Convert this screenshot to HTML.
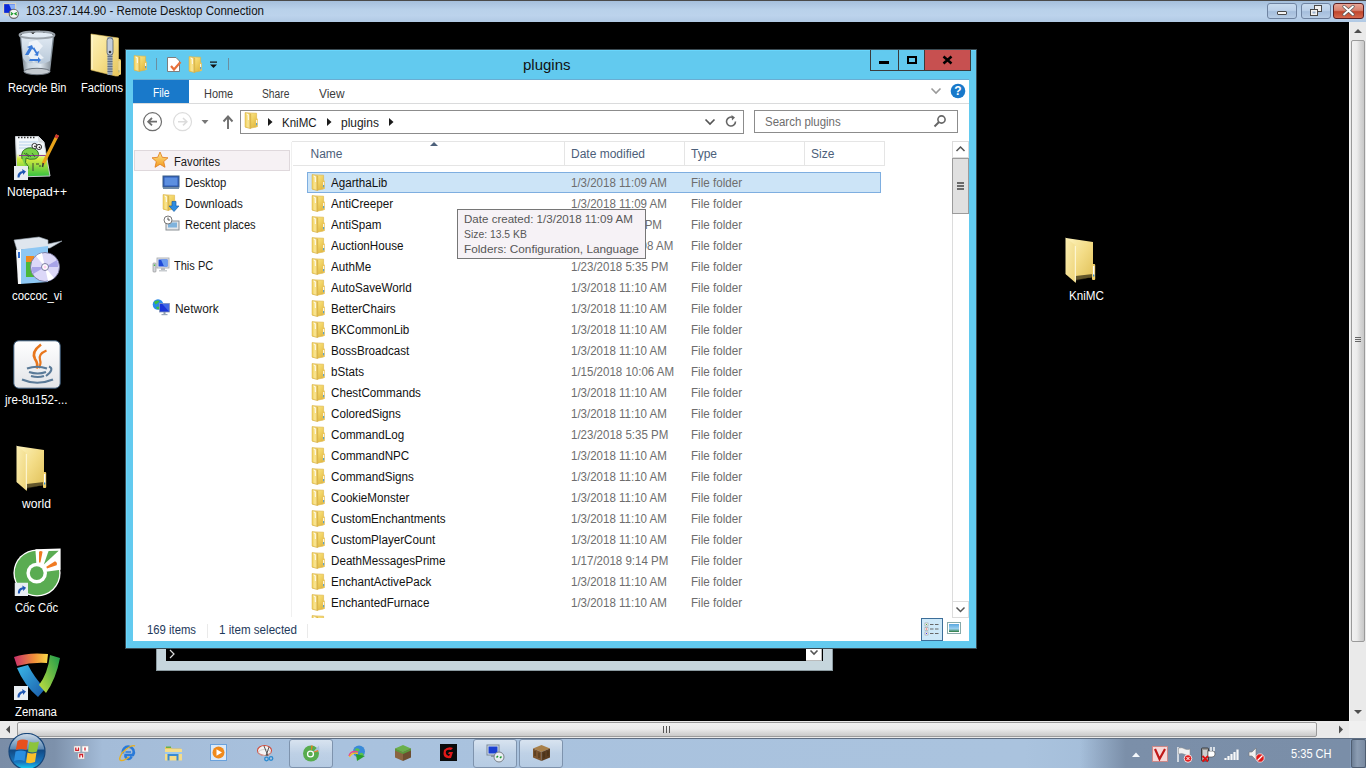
<!DOCTYPE html>
<html><head><meta charset="utf-8">
<style>
*{margin:0;padding:0;box-sizing:border-box}
html,body{width:1366px;height:768px;overflow:hidden;background:#000;font-family:"Liberation Sans",sans-serif;font-size:12px}
.a{position:absolute;display:block}
.t{position:absolute;white-space:nowrap;line-height:1;}
.sh{text-shadow:1px 1px 1px #000}
</style></head><body>
<svg width="0" height="0" style="position:absolute">
<defs>
<linearGradient id="fg1" x1="0" y1="0" x2="1" y2="0"><stop offset="0" stop-color="#fbeeaa"/><stop offset="1" stop-color="#f0d572"/></linearGradient>
<linearGradient id="fg2" x1="0" y1="0" x2="0" y2="1"><stop offset="0" stop-color="#fff6c4"/><stop offset="1" stop-color="#efd676"/></linearGradient>
<linearGradient id="fb" x1="0" y1="0" x2="1" y2="1"><stop offset="0" stop-color="#fff0a0"/><stop offset="0.5" stop-color="#f2d466"/><stop offset="1" stop-color="#ddb23a"/></linearGradient>
<linearGradient id="ff" x1="0" y1="0" x2="1" y2="0"><stop offset="0" stop-color="#f0cf58"/><stop offset="0.55" stop-color="#fbe898"/><stop offset="1" stop-color="#d8b040"/></linearGradient>
<symbol id="fold" viewBox="0 0 14 17">
<path d="M1.5 0.8 L12.6 1.2 L12.6 15 L6 16.2 L1.5 15.2 Z" fill="url(#fb)" stroke="#dcb448" stroke-width="0.6"/>
<path d="M1 0.6 L6.8 2 L6.8 16.6 L1 15 Z" fill="url(#ff)" stroke="#d4ae48" stroke-width="0.5"/>
<path d="M2.6 2 L4.2 2.6 L4.4 8" stroke="#fff" stroke-width="0.9" fill="none"/>
<rect x="11.6" y="6.4" width="2.2" height="8.6" rx="0.6" fill="#eac458"/>
<rect x="12.2" y="8" width="0.9" height="3" fill="#fff"/>
<rect x="12.2" y="11" width="0.9" height="2.3" fill="#3b9ae6"/>
</symbol>
<linearGradient id="Fb" x1="0" y1="0" x2="1" y2="1"><stop offset="0" stop-color="#fdf3be"/><stop offset="0.5" stop-color="#f3dc86"/><stop offset="1" stop-color="#e0c058"/></linearGradient>
<linearGradient id="Ff" x1="0" y1="0" x2="1" y2="1"><stop offset="0" stop-color="#fbeeb2"/><stop offset="1" stop-color="#edd376"/></linearGradient>
<symbol id="bigfold" viewBox="0 0 34 48">
<path d="M3 2 L30 6 L30 41 L12 44 L3 38 Z" fill="url(#Fb)"/>
<path d="M12.5 40 L30 38 L30 41 L12.5 45 Z" fill="#2a2410" opacity="0.7"/>
<path d="M2.5 1.5 L12.8 9.5 L12.8 47 L2.5 38 Z" fill="url(#Ff)"/>
<path d="M11.8 9.5 L12.8 10 L12.8 46 L11.8 45 Z" fill="#fffbe0"/>
<rect x="29" y="28" width="3.2" height="16" rx="1" fill="#efcf6a"/>
<rect x="30" y="30" width="1.3" height="9" fill="#fff"/>
<rect x="30" y="38.5" width="1.3" height="2" fill="#2f8ae0"/>
</symbol>
<symbol id="shortcut" viewBox="0 0 14 14">
<rect x="0" y="0" width="14" height="14" fill="#e8edf2"/>
<path d="M3.5 11.5 Q3 6 8.5 5 L8 3 L12 5.5 L9 9 L9 7 Q6 7.5 5.5 11.5 Z" fill="#1f57b3"/>
</symbol>
</defs>
</svg>

<div class="a" style="left:0px;top:0px;width:1366px;height:1px;background:#4a4a4a"></div>
<div class="a" style="left:0px;top:1px;width:1366px;height:21px;background:linear-gradient(#a5bfdc,#b9d1ea 40%,#bcd3ec 70%,#b1c9e4)"></div>
<svg class="a" style="left:1px;top:1px" width="19" height="19" viewBox="0 0 19 19"><rect x="2.5" y="2.5" width="12" height="10" fill="#0a28d8" stroke="#d8d4c4" stroke-width="1.3"/><path d="M8 3.2 L14 3.2 L14 8 L10 8 Z" fill="#8ab0f8"/><rect x="5" y="13" width="5" height="2" fill="#d8d4c4"/><circle cx="12.8" cy="12.8" r="4.6" fill="#f4f4f4" stroke="#6a6a6a" stroke-width="1.1"/><path d="M9.8 11.5 L11.5 12.8 L9.8 14 M15.8 11.5 L14 12.8 L15.8 14" stroke="#1c9a2a" stroke-width="1.4" fill="none"/></svg>
<div class="t" style="left:25.5px;top:5.42px;font-size:12.5px;color:#111;transform:scaleX(0.9232);transform-origin:0 0;">103.237.144.90 - Remote Desktop Connection</div>
<div class="a" style="left:1267px;top:3px;width:30px;height:16px;border:1px solid #6f84a2;border-radius:3px;background:linear-gradient(#c8dbef,#bcd1ea 45%,#a5bedc 55%,#b7cde6)"></div>
<div class="a" style="left:1277px;top:11px;width:10px;height:4px;background:#f4f4f4;border:1px solid #4a4a4a;border-radius:1px"></div>
<div class="a" style="left:1301px;top:3px;width:30px;height:16px;border:1px solid #6f84a2;border-radius:3px;background:linear-gradient(#c8dbef,#bcd1ea 45%,#a5bedc 55%,#b7cde6)"></div>
<svg class="a" style="left:1310px;top:5px" width="12" height="11" viewBox="0 0 12 11"><rect x="4.5" y="0.5" width="7" height="6" fill="#f2f2f2" stroke="#4a4a4a"/><rect x="0.5" y="4.5" width="7" height="6" fill="#f2f2f2" stroke="#4a4a4a"/><rect x="2.5" y="6.5" width="3" height="2" fill="#9db4d0"/></svg>
<div class="a" style="left:1333px;top:3px;width:31px;height:16px;border:1px solid #5a1f22;border-radius:3px;background:linear-gradient(#e8a597,#d88270 45%,#c0462c 55%,#d6694f)"></div>
<svg class="a" style="left:1342px;top:5px" width="13" height="11" viewBox="0 0 13 11"><path d="M2 1.5 L11 9.5 M11 1.5 L2 9.5" stroke="#5b5b5b" stroke-width="3.2" stroke-linecap="round"/><path d="M2 1.5 L11 9.5 M11 1.5 L2 9.5" stroke="#fff" stroke-width="1.8" stroke-linecap="round"/></svg>
<div class="a" style="left:1349px;top:22px;width:17px;height:699px;background:#eaeaea;border-left:1px solid #f4f4f4"></div>
<svg class="a" style="left:1350px;top:22px" width="16" height="18" viewBox="0 0 16 18"><path d="M4 11 L8 7 L12 11 Z" fill="#4d4d4d"/></svg>
<div class="a" style="left:1351px;top:40px;width:14px;height:602px;border:1px solid #9a9a9a;border-radius:2px;background:linear-gradient(90deg,#f1f1f1,#ececec 40%,#d6d6d6 70%,#c8c8c8)"></div>
<div class="a" style="left:1355px;top:337px;width:6px;height:1px;background:#666"></div>
<div class="a" style="left:1355px;top:339px;width:6px;height:1px;background:#666"></div>
<div class="a" style="left:1355px;top:341px;width:6px;height:1px;background:#666"></div>
<svg class="a" style="left:1350px;top:703px" width="16" height="18" viewBox="0 0 16 18"><path d="M4 7 L8 11 L12 7 Z" fill="#4d4d4d"/></svg>
<div class="a" style="left:0px;top:721px;width:1349px;height:17px;background:#eaeaea"></div>
<svg class="a" style="left:0px;top:721px" width="17" height="17" viewBox="0 0 17 17"><path d="M10 4.5 L6 8.5 L10 12.5 Z" fill="#4d4d4d"/></svg>
<div class="a" style="left:17px;top:722px;width:1300px;height:15px;border:1px solid #9a9a9a;border-radius:2px;background:linear-gradient(#f2f2f2,#ececec 45%,#d8d8d8 75%,#cacaca)"></div>
<div class="a" style="left:663px;top:726px;width:1px;height:7px;background:#555"></div>
<div class="a" style="left:666px;top:726px;width:1px;height:7px;background:#555"></div>
<div class="a" style="left:669px;top:726px;width:1px;height:7px;background:#555"></div>
<svg class="a" style="left:1332px;top:721px" width="17" height="17" viewBox="0 0 17 17"><path d="M7 4.5 L11 8.5 L7 12.5 Z" fill="#4d4d4d"/></svg>
<div class="a" style="left:1349px;top:721px;width:17px;height:17px;background:#f0f0f0"></div>
<div class="a" style="left:0px;top:738px;width:1366px;height:30px;background:linear-gradient(90deg,#7a8da7 0,#7d91ab 4%,#a4bcd8 7.5%,#a9c2de 25%,#aac3de 75%,#9cb6d3 88%,#8097b6 100%);border-top:1px solid #5f6f84"></div>
<svg class="a" style="left:7px;top:733px" width="40" height="35" viewBox="0 0 40 35"><defs><linearGradient id="orb" x1="0" y1="0" x2="0" y2="1"><stop offset="0" stop-color="#d0dce8"/><stop offset="0.42" stop-color="#5f8ab4"/><stop offset="0.47" stop-color="#114a86"/><stop offset="0.8" stop-color="#1a76be"/><stop offset="1" stop-color="#18d8f8"/></linearGradient></defs><circle cx="20" cy="18.5" r="18" fill="url(#orb)" stroke="#17467a" stroke-width="1.2"/><path d="M10.5 8 Q15 5.5 21 7.5 L19.5 17 Q14.5 15 8.8 17 Z" fill="#e8501c"/><path d="M22.5 8.5 Q26.5 10.5 32 8.5 L30 18.5 Q25.5 20.5 21 18.5 Z" fill="#8cc43c"/><path d="M8.5 18.5 Q14 16.5 19 18.5 L17.5 28 Q12.5 26 7 28 Z" fill="#2a8ee0"/><path d="M20.5 19.5 Q25 21.5 29.5 19.5 L28 29 Q23.5 31 19 29.5 Z" fill="#fbc02a"/></svg>
<div class="a" style="left:289px;top:739px;width:44px;height:29px;border:1px solid #7e93ad;border-radius:3px;background:linear-gradient(rgba(255,255,255,0.55),rgba(255,255,255,0.25) 50%,rgba(255,255,255,0.15))"></div>
<div class="a" style="left:473px;top:739px;width:44px;height:29px;border:1px solid #7e93ad;border-radius:3px;background:linear-gradient(rgba(255,255,255,0.55),rgba(255,255,255,0.25) 50%,rgba(255,255,255,0.15))"></div>
<div class="a" style="left:519px;top:739px;width:44px;height:29px;border:1px solid #7e93ad;border-radius:3px;background:linear-gradient(rgba(255,255,255,0.55),rgba(255,255,255,0.25) 50%,rgba(255,255,255,0.15))"></div>
<div class="a" style="left:156px;top:645px;width:677px;height:26px;background:#c6d6dd;border:1px solid #8b9aa0"></div>
<div class="a" style="left:166px;top:645px;width:657px;height:16px;background:#000"></div>
<svg class="a" style="left:168px;top:648px" width="8" height="12" viewBox="0 0 8 12"><path d="M2 2 L6 6 L2 10" stroke="#ddd" stroke-width="1.2" fill="none"/></svg>
<div class="a" style="left:806px;top:645px;width:16px;height:16px;background:#fff;border-right:1px solid #bbb;border-bottom:1px solid #bbb"></div>
<svg class="a" style="left:806px;top:648px" width="16" height="10" viewBox="0 0 16 10"><path d="M4.5 2.5 L8 6 L11.5 2.5" stroke="#555" stroke-width="1.6" fill="none"/></svg>
<div class="a" style="left:125px;top:49px;width:852px;height:600px;background:#3a4a52"></div>
<div class="a" style="left:126px;top:50px;width:850px;height:598px;background:#62caef;border-top:1px solid #69d6fc;border-left:1px solid #69d6fc"></div>
<div class="a" style="left:133px;top:80px;width:836px;height:561px;background:#fff"></div>
<div class="a" style="left:133px;top:79px;width:836px;height:1px;background:#6aadd2"></div>
<div class="t" style="left:523px;top:56.90px;font-size:15px;color:#111;">plugins</div>
<div class="a" style="left:870px;top:50px;width:101px;height:21px;background:#3b3b3b"></div>
<div class="a" style="left:871px;top:50px;width:27px;height:20px;background:#62caef"></div>
<div class="a" style="left:899px;top:50px;width:25px;height:20px;background:#62caef"></div>
<div class="a" style="left:925px;top:50px;width:45px;height:20px;background:#c75050"></div>
<div class="a" style="left:879px;top:61px;width:10px;height:3px;background:#000"></div>
<div class="a" style="left:907px;top:56px;width:10px;height:8px;border:2px solid #000"></div>
<svg class="a" style="left:942px;top:55px" width="11" height="10" viewBox="0 0 11 10"><path d="M1.5 1.5 L9.5 8.5 M9.5 1.5 L1.5 8.5" stroke="#000" stroke-width="2.5"/></svg>
<svg class="a" style="left:133px;top:55px" width="14" height="17" viewBox="0 0 14 17"><use href="#fold"/></svg>
<div class="a" style="left:156px;top:58px;width:1px;height:12px;background:#6b8fa0"></div>
<svg class="a" style="left:166px;top:57px" width="17" height="16" viewBox="0 0 17 16"><path d="M1.5 0.5 H10 L13.5 4 V14.5 H1.5 Z" fill="#fff" stroke="#7d7d7d"/><path d="M5 9 L8 12.5 L14.5 5" stroke="#e8703a" stroke-width="2.2" fill="none"/></svg>
<svg class="a" style="left:188px;top:56px" width="14" height="17" viewBox="0 0 14 17"><use href="#fold"/></svg>
<svg class="a" style="left:209px;top:60px" width="9" height="9" viewBox="0 0 9 9"><rect x="1" y="1.5" width="7" height="1.2" fill="#111"/><path d="M1 4.5 H8 L4.5 8 Z" fill="#111"/></svg>
<div class="a" style="left:228px;top:58px;width:1px;height:12px;background:#6b8fa0"></div>
<div class="a" style="left:133px;top:80px;width:56px;height:23px;background:#1979ca"></div>
<div class="t" style="left:152.5px;top:87.34px;font-size:12px;color:#fff;transform:scaleX(0.8585);transform-origin:0 0;">File</div>
<div class="t" style="left:203.5px;top:87.84px;font-size:12px;color:#3c3c3c;transform:scaleX(0.9122);transform-origin:0 0;">Home</div>
<div class="t" style="left:261.5px;top:87.84px;font-size:12px;color:#3c3c3c;transform:scaleX(0.8588);transform-origin:0 0;">Share</div>
<div class="t" style="left:318.5px;top:87.84px;font-size:12px;color:#3c3c3c;transform:scaleX(0.9886);transform-origin:0 0;">View</div>
<div class="a" style="left:133px;top:103px;width:836px;height:1px;background:#dadbdc"></div>
<svg class="a" style="left:928px;top:84px" width="16" height="14" viewBox="0 0 16 14"><path d="M3.5 4.5 L8 9 L12.5 4.5" stroke="#9a9a9a" stroke-width="1.6" fill="none"/></svg>
<svg class="a" style="left:950px;top:83px" width="16" height="16" viewBox="0 0 16 16"><circle cx="8" cy="8" r="7.3" fill="#1979ca"/><text x="8" y="12.3" font-family="Liberation Sans" font-weight="bold" font-size="12" fill="#fff" text-anchor="middle">?</text></svg>
<svg class="a" style="left:142px;top:111px" width="22" height="22" viewBox="0 0 22 22"><circle cx="10.5" cy="10.7" r="9" fill="none" stroke="#6e6e6e" stroke-width="1.2"/><path d="M15 10.7 H6.5 M10 7 L6.2 10.7 L10 14.4" stroke="#6e6e6e" stroke-width="1.8" fill="none"/></svg>
<svg class="a" style="left:172px;top:111px" width="22" height="22" viewBox="0 0 22 22"><circle cx="10.5" cy="10.7" r="9" fill="none" stroke="#dcdcdc" stroke-width="1.2"/><path d="M6 10.7 H14.5 M11 7 L14.8 10.7 L11 14.4" stroke="#dcdcdc" stroke-width="1.6" fill="none"/></svg>
<svg class="a" style="left:200px;top:118px" width="10" height="8" viewBox="0 0 10 8"><path d="M1.5 2 H8.5 L5 6 Z" fill="#777"/></svg>
<svg class="a" style="left:221px;top:114px" width="14" height="16" viewBox="0 0 14 16"><path d="M7 15 V3 M2.5 7.5 L7 2.5 L11.5 7.5" stroke="#6e6e6e" stroke-width="1.9" fill="none"/></svg>
<div class="a" style="left:240px;top:110px;width:504px;height:24px;border:1px solid #8c8c8c;background:#fff"></div>
<svg class="a" style="left:244px;top:112px" width="14" height="17" viewBox="0 0 14 17"><use href="#fold"/></svg>
<svg class="a" style="left:267px;top:117px" width="6" height="10" viewBox="0 0 6 10"><path d="M1 1 L5.5 5 L1 9 Z" fill="#1a1a1a"/></svg>
<svg class="a" style="left:326px;top:117px" width="6" height="10" viewBox="0 0 6 10"><path d="M1 1 L5.5 5 L1 9 Z" fill="#1a1a1a"/></svg>
<svg class="a" style="left:388px;top:117px" width="6" height="10" viewBox="0 0 6 10"><path d="M1 1 L5.5 5 L1 9 Z" fill="#1a1a1a"/></svg>
<div class="t" style="left:281.5px;top:116.84px;font-size:12px;color:#1a1a1a;transform:scaleX(0.9609);transform-origin:0 0;">KniMC</div>
<div class="t" style="left:340.5px;top:116.84px;font-size:12px;color:#1a1a1a;transform:scaleX(0.9966);transform-origin:0 0;">plugins</div>
<svg class="a" style="left:703px;top:116px" width="14" height="12" viewBox="0 0 14 12"><path d="M2.5 3.5 L7 8 L11.5 3.5" stroke="#555" stroke-width="1.7" fill="none"/></svg>
<svg class="a" style="left:724px;top:114px" width="15" height="15" viewBox="0 0 15 15"><path d="M11.5 7.5 A4.5 4.5 0 1 1 9 3.5" stroke="#666" stroke-width="1.6" fill="none"/><path d="M7.5 1 L11 3.5 L8 6.5 Z" fill="#666"/></svg>
<div class="a" style="left:754px;top:110px;width:204px;height:23px;border:1px solid #8c8c8c;background:#fff"></div>
<div class="t" style="left:764.5px;top:116.04px;font-size:12px;color:#6d6d6d;transform:scaleX(0.9536);transform-origin:0 0;">Search plugins</div>
<svg class="a" style="left:933px;top:114px" width="14" height="15" viewBox="0 0 14 15"><circle cx="8.5" cy="5.5" r="3.6" fill="none" stroke="#666" stroke-width="1.6"/><path d="M6 8 L1.5 12.5" stroke="#666" stroke-width="1.9"/></svg>
<div class="a" style="left:134px;top:150px;width:156px;height:21px;background:#f6f1f4;border:1px solid #dfd8dc"></div>
<svg class="a" style="left:151px;top:151px" width="18" height="18" viewBox="0 0 18 18"><defs><linearGradient id="st" x1="0" y1="0" x2="0" y2="1"><stop offset="0" stop-color="#fde58a"/><stop offset="1" stop-color="#f39a1e"/></linearGradient></defs><path d="M9 1 L11.3 6.3 L17 6.8 L12.7 10.6 L14 16.3 L9 13.3 L4 16.3 L5.3 10.6 L1 6.8 L6.7 6.3 Z" fill="url(#st)" stroke="#e07a1a" stroke-width="0.8"/></svg>
<div class="t" style="left:174.3px;top:155.84px;font-size:12px;color:#1a1a1a;transform:scaleX(0.9322);transform-origin:0 0;">Favorites</div>
<svg class="a" style="left:162px;top:174px" width="18" height="16" viewBox="0 0 18 16"><rect x="1" y="2" width="16" height="11" fill="#2d59b8" stroke="#3b5f86"/><rect x="2.5" y="3.5" width="13" height="8" fill="#5c8fe0"/><rect x="1" y="13" width="16" height="2" fill="#6f8aa6"/></svg>
<div class="t" style="left:184.5px;top:176.84px;font-size:12px;color:#1a1a1a;transform:scaleX(0.9404);transform-origin:0 0;">Desktop</div>
<svg class="a" style="left:162px;top:194px" width="14" height="17" viewBox="0 0 14 17"><use href="#fold"/></svg>
<svg class="a" style="left:168px;top:201px" width="12" height="11" viewBox="0 0 12 11"><path d="M4 0.5 H8 V5 H11 L6 10.5 L1 5 H4 Z" fill="#2e8de0" stroke="#1b5fa6" stroke-width="0.7"/></svg>
<div class="t" style="left:184.5px;top:197.84px;font-size:12px;color:#1a1a1a;transform:scaleX(0.9736);transform-origin:0 0;">Downloads</div>
<svg class="a" style="left:163px;top:215px" width="17" height="17" viewBox="0 0 17 17"><rect x="3" y="6" width="13" height="9" fill="#e4e7ea" stroke="#8a8f94"/><rect x="5" y="7.5" width="9" height="5" fill="#7fb3dd"/><circle cx="5" cy="5" r="4" fill="#fff" stroke="#777"/><path d="M5 2.5 V5 H7" stroke="#555" fill="none"/></svg>
<div class="t" style="left:184.5px;top:218.84px;font-size:12px;color:#1a1a1a;transform:scaleX(0.9297);transform-origin:0 0;">Recent places</div>
<svg class="a" style="left:152px;top:256px" width="18" height="18" viewBox="0 0 18 18"><rect x="5" y="2" width="12" height="10" fill="#e8eaec" stroke="#a0a4a8" stroke-width="0.8"/><rect x="6.5" y="3.5" width="9" height="7" fill="#1f4ad8"/><path d="M9 3.5 L15.5 3.5 L15.5 10.5 L12 10.5 Z" fill="#6a9cf0"/><rect x="9" y="12" width="4" height="2" fill="#b8bcc0"/><rect x="7" y="14" width="8" height="1.5" fill="#c8ccd0"/><rect x="1" y="7" width="3" height="9" rx="0.8" fill="#d4d8dc" stroke="#888" stroke-width="0.6"/><rect x="1.8" y="8.5" width="1.4" height="1.4" fill="#3cb83c"/></svg>
<div class="t" style="left:174px;top:260.44px;font-size:12px;color:#1a1a1a;transform:scaleX(0.9186);transform-origin:0 0;">This PC</div>
<svg class="a" style="left:152px;top:298px" width="18" height="18" viewBox="0 0 18 18"><circle cx="6" cy="6.5" r="5.3" fill="#2a8ae8"/><path d="M2 4 Q4.5 1.5 7.5 3 Q6 6 3.5 6.5 Z M4 9 Q7 7.5 9 10 Q7 12 5 11 Z" fill="#40c040"/><rect x="7.5" y="5.5" width="10" height="8.5" fill="#1a36d8" stroke="#8a9ab8" stroke-width="0.8"/><path d="M10 5.8 L17 5.8 L17 13.5 Z" fill="#5a8af0" opacity="0.6"/><rect x="11.5" y="14" width="2" height="2" fill="#8a9ab0"/><rect x="9.5" y="16" width="6" height="1.2" fill="#9aa8b8"/></svg>
<div class="t" style="left:174.5px;top:302.84px;font-size:12px;color:#1a1a1a;transform:scaleX(0.9952);transform-origin:0 0;">Network</div>
<div class="a" style="left:291px;top:142px;width:1px;height:475px;background:#f0f0f0"></div>
<div class="a" style="left:292px;top:141px;width:593px;height:1px;background:#e5e5e5"></div>
<div class="a" style="left:293px;top:165px;width:592px;height:1px;background:#e5e5e5"></div>
<div class="a" style="left:564px;top:142px;width:1px;height:23px;background:#e5e5e5"></div>
<div class="a" style="left:684px;top:142px;width:1px;height:23px;background:#e5e5e5"></div>
<div class="a" style="left:804px;top:142px;width:1px;height:23px;background:#e5e5e5"></div>
<div class="a" style="left:884px;top:142px;width:1px;height:23px;background:#e5e5e5"></div>
<div class="t" style="left:310.5px;top:148.04px;font-size:12px;color:#4c607a;">Name</div>
<svg class="a" style="left:429px;top:141px" width="10" height="6" viewBox="0 0 10 6"><path d="M1 5 L5 1 L9 5 Z" fill="#4c607a"/></svg>
<div class="t" style="left:571px;top:148.04px;font-size:12px;color:#4c607a;">Date modified</div>
<div class="t" style="left:691px;top:148.04px;font-size:12px;color:#4c607a;">Type</div>
<div class="t" style="left:811px;top:148.04px;font-size:12px;color:#4c607a;">Size</div>
<div class="a" style="left:307px;top:172px;width:574px;height:21px;background:#cce4f7;border:1px solid #7eaee0"></div>
<div class="a" style="left:293px;top:166px;width:659px;height:452px;overflow:hidden">
<svg class="a" style="left:18px;top:8px" width="14" height="17" viewBox="0 0 14 17"><use href="#fold"/></svg>
<div class="t" style="left:38px;top:11.34px;font-size:12px;color:#111;transform:scaleX(0.9700);transform-origin:0 0;">AgarthaLib</div>
<div class="t" style="left:278px;top:11.34px;font-size:12px;color:#6d6d6d;transform:scaleX(0.9600);transform-origin:0 0;">1/3/2018 11:09 AM</div>
<div class="t" style="left:398px;top:11.34px;font-size:12px;color:#6d6d6d;transform:scaleX(0.9700);transform-origin:0 0;">File folder</div>
<svg class="a" style="left:18px;top:29px" width="14" height="17" viewBox="0 0 14 17"><use href="#fold"/></svg>
<div class="t" style="left:38px;top:32.34px;font-size:12px;color:#111;transform:scaleX(0.9700);transform-origin:0 0;">AntiCreeper</div>
<div class="t" style="left:278px;top:32.34px;font-size:12px;color:#6d6d6d;transform:scaleX(0.9600);transform-origin:0 0;">1/3/2018 11:09 AM</div>
<div class="t" style="left:398px;top:32.34px;font-size:12px;color:#6d6d6d;transform:scaleX(0.9700);transform-origin:0 0;">File folder</div>
<svg class="a" style="left:18px;top:50px" width="14" height="17" viewBox="0 0 14 17"><use href="#fold"/></svg>
<div class="t" style="left:38px;top:53.34px;font-size:12px;color:#111;transform:scaleX(0.9700);transform-origin:0 0;">AntiSpam</div>
<div class="t" style="left:278px;top:53.34px;font-size:12px;color:#6d6d6d;transform:scaleX(0.9600);transform-origin:0 0;">1/3/2018 1:09 PM</div>
<div class="t" style="left:398px;top:53.34px;font-size:12px;color:#6d6d6d;transform:scaleX(0.9700);transform-origin:0 0;">File folder</div>
<svg class="a" style="left:18px;top:71px" width="14" height="17" viewBox="0 0 14 17"><use href="#fold"/></svg>
<div class="t" style="left:38px;top:74.34px;font-size:12px;color:#111;transform:scaleX(0.9700);transform-origin:0 0;">AuctionHouse</div>
<div class="t" style="left:278px;top:74.34px;font-size:12px;color:#6d6d6d;transform:scaleX(0.9600);transform-origin:0 0;">1/12/2018 11:08 AM</div>
<div class="t" style="left:398px;top:74.34px;font-size:12px;color:#6d6d6d;transform:scaleX(0.9700);transform-origin:0 0;">File folder</div>
<svg class="a" style="left:18px;top:92px" width="14" height="17" viewBox="0 0 14 17"><use href="#fold"/></svg>
<div class="t" style="left:38px;top:95.34px;font-size:12px;color:#111;transform:scaleX(0.9700);transform-origin:0 0;">AuthMe</div>
<div class="t" style="left:278px;top:95.34px;font-size:12px;color:#6d6d6d;transform:scaleX(0.9600);transform-origin:0 0;">1/23/2018 5:35 PM</div>
<div class="t" style="left:398px;top:95.34px;font-size:12px;color:#6d6d6d;transform:scaleX(0.9700);transform-origin:0 0;">File folder</div>
<svg class="a" style="left:18px;top:113px" width="14" height="17" viewBox="0 0 14 17"><use href="#fold"/></svg>
<div class="t" style="left:38px;top:116.34px;font-size:12px;color:#111;transform:scaleX(0.9700);transform-origin:0 0;">AutoSaveWorld</div>
<div class="t" style="left:278px;top:116.34px;font-size:12px;color:#6d6d6d;transform:scaleX(0.9600);transform-origin:0 0;">1/3/2018 11:10 AM</div>
<div class="t" style="left:398px;top:116.34px;font-size:12px;color:#6d6d6d;transform:scaleX(0.9700);transform-origin:0 0;">File folder</div>
<svg class="a" style="left:18px;top:134px" width="14" height="17" viewBox="0 0 14 17"><use href="#fold"/></svg>
<div class="t" style="left:38px;top:137.34px;font-size:12px;color:#111;transform:scaleX(0.9700);transform-origin:0 0;">BetterChairs</div>
<div class="t" style="left:278px;top:137.34px;font-size:12px;color:#6d6d6d;transform:scaleX(0.9600);transform-origin:0 0;">1/3/2018 11:10 AM</div>
<div class="t" style="left:398px;top:137.34px;font-size:12px;color:#6d6d6d;transform:scaleX(0.9700);transform-origin:0 0;">File folder</div>
<svg class="a" style="left:18px;top:155px" width="14" height="17" viewBox="0 0 14 17"><use href="#fold"/></svg>
<div class="t" style="left:38px;top:158.34px;font-size:12px;color:#111;transform:scaleX(0.9700);transform-origin:0 0;">BKCommonLib</div>
<div class="t" style="left:278px;top:158.34px;font-size:12px;color:#6d6d6d;transform:scaleX(0.9600);transform-origin:0 0;">1/3/2018 11:10 AM</div>
<div class="t" style="left:398px;top:158.34px;font-size:12px;color:#6d6d6d;transform:scaleX(0.9700);transform-origin:0 0;">File folder</div>
<svg class="a" style="left:18px;top:176px" width="14" height="17" viewBox="0 0 14 17"><use href="#fold"/></svg>
<div class="t" style="left:38px;top:179.34px;font-size:12px;color:#111;transform:scaleX(0.9700);transform-origin:0 0;">BossBroadcast</div>
<div class="t" style="left:278px;top:179.34px;font-size:12px;color:#6d6d6d;transform:scaleX(0.9600);transform-origin:0 0;">1/3/2018 11:10 AM</div>
<div class="t" style="left:398px;top:179.34px;font-size:12px;color:#6d6d6d;transform:scaleX(0.9700);transform-origin:0 0;">File folder</div>
<svg class="a" style="left:18px;top:197px" width="14" height="17" viewBox="0 0 14 17"><use href="#fold"/></svg>
<div class="t" style="left:38px;top:200.34px;font-size:12px;color:#111;transform:scaleX(0.9700);transform-origin:0 0;">bStats</div>
<div class="t" style="left:278px;top:200.34px;font-size:12px;color:#6d6d6d;transform:scaleX(0.9600);transform-origin:0 0;">1/15/2018 10:06 AM</div>
<div class="t" style="left:398px;top:200.34px;font-size:12px;color:#6d6d6d;transform:scaleX(0.9700);transform-origin:0 0;">File folder</div>
<svg class="a" style="left:18px;top:218px" width="14" height="17" viewBox="0 0 14 17"><use href="#fold"/></svg>
<div class="t" style="left:38px;top:221.34px;font-size:12px;color:#111;transform:scaleX(0.9700);transform-origin:0 0;">ChestCommands</div>
<div class="t" style="left:278px;top:221.34px;font-size:12px;color:#6d6d6d;transform:scaleX(0.9600);transform-origin:0 0;">1/3/2018 11:10 AM</div>
<div class="t" style="left:398px;top:221.34px;font-size:12px;color:#6d6d6d;transform:scaleX(0.9700);transform-origin:0 0;">File folder</div>
<svg class="a" style="left:18px;top:239px" width="14" height="17" viewBox="0 0 14 17"><use href="#fold"/></svg>
<div class="t" style="left:38px;top:242.34px;font-size:12px;color:#111;transform:scaleX(0.9700);transform-origin:0 0;">ColoredSigns</div>
<div class="t" style="left:278px;top:242.34px;font-size:12px;color:#6d6d6d;transform:scaleX(0.9600);transform-origin:0 0;">1/3/2018 11:10 AM</div>
<div class="t" style="left:398px;top:242.34px;font-size:12px;color:#6d6d6d;transform:scaleX(0.9700);transform-origin:0 0;">File folder</div>
<svg class="a" style="left:18px;top:260px" width="14" height="17" viewBox="0 0 14 17"><use href="#fold"/></svg>
<div class="t" style="left:38px;top:263.34px;font-size:12px;color:#111;transform:scaleX(0.9700);transform-origin:0 0;">CommandLog</div>
<div class="t" style="left:278px;top:263.34px;font-size:12px;color:#6d6d6d;transform:scaleX(0.9600);transform-origin:0 0;">1/23/2018 5:35 PM</div>
<div class="t" style="left:398px;top:263.34px;font-size:12px;color:#6d6d6d;transform:scaleX(0.9700);transform-origin:0 0;">File folder</div>
<svg class="a" style="left:18px;top:281px" width="14" height="17" viewBox="0 0 14 17"><use href="#fold"/></svg>
<div class="t" style="left:38px;top:284.34px;font-size:12px;color:#111;transform:scaleX(0.9700);transform-origin:0 0;">CommandNPC</div>
<div class="t" style="left:278px;top:284.34px;font-size:12px;color:#6d6d6d;transform:scaleX(0.9600);transform-origin:0 0;">1/3/2018 11:10 AM</div>
<div class="t" style="left:398px;top:284.34px;font-size:12px;color:#6d6d6d;transform:scaleX(0.9700);transform-origin:0 0;">File folder</div>
<svg class="a" style="left:18px;top:302px" width="14" height="17" viewBox="0 0 14 17"><use href="#fold"/></svg>
<div class="t" style="left:38px;top:305.34px;font-size:12px;color:#111;transform:scaleX(0.9700);transform-origin:0 0;">CommandSigns</div>
<div class="t" style="left:278px;top:305.34px;font-size:12px;color:#6d6d6d;transform:scaleX(0.9600);transform-origin:0 0;">1/3/2018 11:10 AM</div>
<div class="t" style="left:398px;top:305.34px;font-size:12px;color:#6d6d6d;transform:scaleX(0.9700);transform-origin:0 0;">File folder</div>
<svg class="a" style="left:18px;top:323px" width="14" height="17" viewBox="0 0 14 17"><use href="#fold"/></svg>
<div class="t" style="left:38px;top:326.34px;font-size:12px;color:#111;transform:scaleX(0.9700);transform-origin:0 0;">CookieMonster</div>
<div class="t" style="left:278px;top:326.34px;font-size:12px;color:#6d6d6d;transform:scaleX(0.9600);transform-origin:0 0;">1/3/2018 11:10 AM</div>
<div class="t" style="left:398px;top:326.34px;font-size:12px;color:#6d6d6d;transform:scaleX(0.9700);transform-origin:0 0;">File folder</div>
<svg class="a" style="left:18px;top:344px" width="14" height="17" viewBox="0 0 14 17"><use href="#fold"/></svg>
<div class="t" style="left:38px;top:347.34px;font-size:12px;color:#111;transform:scaleX(0.9700);transform-origin:0 0;">CustomEnchantments</div>
<div class="t" style="left:278px;top:347.34px;font-size:12px;color:#6d6d6d;transform:scaleX(0.9600);transform-origin:0 0;">1/3/2018 11:10 AM</div>
<div class="t" style="left:398px;top:347.34px;font-size:12px;color:#6d6d6d;transform:scaleX(0.9700);transform-origin:0 0;">File folder</div>
<svg class="a" style="left:18px;top:365px" width="14" height="17" viewBox="0 0 14 17"><use href="#fold"/></svg>
<div class="t" style="left:38px;top:368.34px;font-size:12px;color:#111;transform:scaleX(0.9700);transform-origin:0 0;">CustomPlayerCount</div>
<div class="t" style="left:278px;top:368.34px;font-size:12px;color:#6d6d6d;transform:scaleX(0.9600);transform-origin:0 0;">1/3/2018 11:10 AM</div>
<div class="t" style="left:398px;top:368.34px;font-size:12px;color:#6d6d6d;transform:scaleX(0.9700);transform-origin:0 0;">File folder</div>
<svg class="a" style="left:18px;top:386px" width="14" height="17" viewBox="0 0 14 17"><use href="#fold"/></svg>
<div class="t" style="left:38px;top:389.34px;font-size:12px;color:#111;transform:scaleX(0.9700);transform-origin:0 0;">DeathMessagesPrime</div>
<div class="t" style="left:278px;top:389.34px;font-size:12px;color:#6d6d6d;transform:scaleX(0.9600);transform-origin:0 0;">1/17/2018 9:14 PM</div>
<div class="t" style="left:398px;top:389.34px;font-size:12px;color:#6d6d6d;transform:scaleX(0.9700);transform-origin:0 0;">File folder</div>
<svg class="a" style="left:18px;top:407px" width="14" height="17" viewBox="0 0 14 17"><use href="#fold"/></svg>
<div class="t" style="left:38px;top:410.34px;font-size:12px;color:#111;transform:scaleX(0.9700);transform-origin:0 0;">EnchantActivePack</div>
<div class="t" style="left:278px;top:410.34px;font-size:12px;color:#6d6d6d;transform:scaleX(0.9600);transform-origin:0 0;">1/3/2018 11:10 AM</div>
<div class="t" style="left:398px;top:410.34px;font-size:12px;color:#6d6d6d;transform:scaleX(0.9700);transform-origin:0 0;">File folder</div>
<svg class="a" style="left:18px;top:428px" width="14" height="17" viewBox="0 0 14 17"><use href="#fold"/></svg>
<div class="t" style="left:38px;top:431.34px;font-size:12px;color:#111;transform:scaleX(0.9700);transform-origin:0 0;">EnchantedFurnace</div>
<div class="t" style="left:278px;top:431.34px;font-size:12px;color:#6d6d6d;transform:scaleX(0.9600);transform-origin:0 0;">1/3/2018 11:10 AM</div>
<div class="t" style="left:398px;top:431.34px;font-size:12px;color:#6d6d6d;transform:scaleX(0.9700);transform-origin:0 0;">File folder</div>
<svg class="a" style="left:18px;top:449px" width="14" height="17" viewBox="0 0 14 17"><use href="#fold"/></svg>
<div class="t" style="left:38px;top:452.34px;font-size:12px;color:#111;transform:scaleX(0.9700);transform-origin:0 0;">EnchantedX</div>
</div>
<div class="a" style="left:952px;top:141px;width:17px;height:477px;background:#fff;border-left:1px solid #dcdcdc"></div>
<div class="a" style="left:952px;top:141px;width:17px;height:17px;border:1px solid #dcdcdc;background:#fff"></div>
<svg class="a" style="left:952px;top:141px" width="17" height="17" viewBox="0 0 17 17"><path d="M4.5 10 L8.5 6 L12.5 10" stroke="#555" stroke-width="1.5" fill="none"/></svg>
<div class="a" style="left:952px;top:158px;width:17px;height:56px;background:#e0e0e0;border:1px solid #9b9b9b"></div>
<div class="a" style="left:957px;top:182px;width:7px;height:2px;background:#6a6a6a"></div>
<div class="a" style="left:957px;top:185px;width:7px;height:2px;background:#6a6a6a"></div>
<div class="a" style="left:957px;top:188px;width:7px;height:2px;background:#6a6a6a"></div>
<div class="a" style="left:952px;top:601px;width:17px;height:17px;border:1px solid #dcdcdc;background:#fff"></div>
<svg class="a" style="left:952px;top:601px" width="17" height="17" viewBox="0 0 17 17"><path d="M4.5 6.5 L8.5 10.5 L12.5 6.5" stroke="#555" stroke-width="1.5" fill="none"/></svg>
<div class="t" style="left:147px;top:624.34px;font-size:12px;color:#1e395b;transform:scaleX(0.9418);transform-origin:0 0;">169 items</div>
<div class="a" style="left:207px;top:624px;width:1px;height:14px;background:#eaeaea"></div>
<div class="t" style="left:218.5px;top:624.34px;font-size:12px;color:#1e395b;transform:scaleX(0.9665);transform-origin:0 0;">1 item selected</div>
<div class="a" style="left:307px;top:624px;width:1px;height:14px;background:#eaeaea"></div>
<div class="a" style="left:921px;top:618px;width:22px;height:23px;background:#cde8f8;border:1px solid #3c6e99"></div>
<svg class="a" style="left:924px;top:622px" width="16" height="15" viewBox="0 0 16 15"><rect x="1" y="1" width="3" height="3" fill="#fff" stroke="#999" stroke-width="0.6"/><rect x="2" y="2" width="1" height="1" fill="#4a4"/><rect x="1" y="5.5" width="3" height="3" fill="#fff" stroke="#999" stroke-width="0.6"/><rect x="2" y="6.5" width="1" height="1" fill="#e33"/><rect x="1" y="10" width="3" height="3" fill="#fff" stroke="#999" stroke-width="0.6"/><rect x="2" y="11" width="1" height="1" fill="#33e"/><path d="M6 2.5 H9.5 M11 2.5 H14.5 M6 7 H9.5 M11 7 H14.5 M6 11.5 H9.5 M11 11.5 H14.5" stroke="#666" stroke-width="1.2"/></svg>
<svg class="a" style="left:947px;top:622px" width="15" height="14" viewBox="0 0 15 14"><defs><linearGradient id="pic" x1="0" y1="0" x2="0" y2="1"><stop offset="0" stop-color="#5aa8e0"/><stop offset="0.6" stop-color="#9bd0f0"/><stop offset="1" stop-color="#2c7a3a"/></linearGradient></defs><rect x="0.5" y="0.5" width="13" height="11" fill="#fff" stroke="#8aa"/><rect x="2" y="2" width="10" height="8" fill="url(#pic)"/></svg>
<div class="a" style="left:457px;top:209px;width:189px;height:50px;background:#f6f2f6;border:1px solid #767676"></div>
<div class="t" style="left:463.7px;top:214.27px;font-size:11.5px;color:#575757;transform:scaleX(1.0052);transform-origin:0 0;">Date created: 1/3/2018 11:09 AM</div>
<div class="t" style="left:463.7px;top:229.27px;font-size:11.5px;color:#575757;transform:scaleX(0.9013);transform-origin:0 0;">Size: 13.5 KB</div>
<div class="t" style="left:463.7px;top:244.27px;font-size:11.5px;color:#575757;transform:scaleX(1.0240);transform-origin:0 0;">Folders: Configuration, Language</div>
<div class="t sh" style="left:7.5px;top:82.09px;font-size:12.3px;color:#fff;transform:scaleX(0.9008);transform-origin:0 0;">Recycle Bin</div>
<div class="t sh" style="left:81.0px;top:82.09px;font-size:12.3px;color:#fff;transform:scaleX(0.9035);transform-origin:0 0;">Factions</div>
<div class="t sh" style="left:7.0px;top:186.09px;font-size:12.3px;color:#fff;transform:scaleX(0.9857);transform-origin:0 0;">Notepad++</div>
<div class="t sh" style="left:12.0px;top:290.09px;font-size:12.3px;color:#fff;transform:scaleX(0.9258);transform-origin:0 0;">coccoc_vi</div>
<div class="t sh" style="left:4.5px;top:394.09px;font-size:12.3px;color:#fff;transform:scaleX(0.9424);transform-origin:0 0;">jre-8u152-...</div>
<div class="t sh" style="left:22.0px;top:498.09px;font-size:12.3px;color:#fff;transform:scaleX(0.9866);transform-origin:0 0;">world</div>
<div class="t sh" style="left:15.0px;top:602.09px;font-size:12.3px;color:#fff;transform:scaleX(0.9117);transform-origin:0 0;">Cốc Cốc</div>
<div class="t sh" style="left:15.0px;top:706.09px;font-size:12.3px;color:#fff;transform:scaleX(0.9308);transform-origin:0 0;">Zemana</div>
<div class="t sh" style="left:1069.25px;top:290.09px;font-size:12.3px;color:#fff;transform:scaleX(0.9483);transform-origin:0 0;">KniMC</div>
<svg class="a" style="left:17px;top:28px" width="40" height="50" viewBox="0 0 40 50"><defs><linearGradient id="rb" x1="0" y1="0" x2="1" y2="0"><stop offset="0" stop-color="#5a646e"/><stop offset="0.25" stop-color="#c8d4de"/><stop offset="0.6" stop-color="#dfe8f0"/><stop offset="1" stop-color="#6a7680"/></linearGradient><linearGradient id="rb2" x1="0" y1="0" x2="0" y2="1"><stop offset="0" stop-color="#e8f0f8"/><stop offset="1" stop-color="#b8c8d8"/></linearGradient></defs><path d="M2.5 7 L37.5 7 L33 44 Q20 49 7 44 Z" fill="url(#rb)"/><path d="M4 7 Q10 1 16 6 Q22 0 27 5 Q33 2 36 7 L33 33 Q24 38 17 34 Q10 38 6 30 Z" fill="url(#rb2)"/><path d="M12 14 L20 12 L26 18 L21 24 L27 30 L16 34 L10 26 Z" fill="#f4f8fc" opacity="0.8"/><path d="M8 27 L12 20 L10 19 L15 17 L17 22 L15 21 L11.5 27 Z M13 31 L21 31 L21 29 L24 32 L21 35 L21 33 L12 33 Z M17 19 L20 24 L22 23 L21 28 L17 27 L19 26 L16 21 Z" fill="#3a7ad8"/><ellipse cx="20" cy="7" rx="17.5" ry="3.5" fill="none" stroke="#9aa2aa" stroke-width="1.8"/><ellipse cx="20" cy="43.5" rx="13" ry="3.2" fill="#c4cad0" stroke="#6a737c" stroke-width="1"/></svg>
<svg class="a" style="left:89px;top:33px" width="34" height="46" viewBox="0 0 34 46"><defs><linearGradient id="zf" x1="0" y1="0" x2="1" y2="1"><stop offset="0" stop-color="#fdf2b8"/><stop offset="0.5" stop-color="#f6e08e"/><stop offset="1" stop-color="#e6c55c"/></linearGradient></defs><rect x="27" y="26" width="5" height="16" rx="1.5" fill="#f0d270"/><rect x="28.6" y="28" width="1.6" height="10" fill="#fff"/><rect x="28.6" y="37" width="1.6" height="2.5" fill="#3a8ee0"/><path d="M2 1 L29.5 5 L29.5 43 L26.5 43 L2 37 Z" fill="url(#zf)" stroke="#e2c25e" stroke-width="0.6"/><path d="M3 2 L3 36" stroke="#fffbe0" stroke-width="1"/><rect x="18.5" y="4" width="5" height="38" fill="#9aa8b8"/><path d="M18.5 6 h5 M18.5 8.5 h5 M18.5 11 h5 M18.5 13.5 h5 M18.5 16 h5 M18.5 18.5 h5 M18.5 21 h5 M18.5 23.5 h5 M18.5 26 h5 M18.5 28.5 h5 M18.5 31 h5 M18.5 33.5 h5 M18.5 36 h5 M18.5 38.5 h5" stroke="#5a6878" stroke-width="0.9"/><rect x="18" y="5" width="6" height="17" rx="2.5" fill="#c4ceda" stroke="#55606c" stroke-width="0.8"/><circle cx="21" cy="19" r="1.3" fill="#333"/></svg>
<svg class="a" style="left:12px;top:133px" width="50" height="50" viewBox="0 0 50 50"><defs><linearGradient id="np" x1="0" y1="0" x2="0" y2="1"><stop offset="0" stop-color="#f5f9fc"/><stop offset="0.42" stop-color="#eef5f8"/><stop offset="0.55" stop-color="#d8ec40"/><stop offset="1" stop-color="#30c040"/></linearGradient></defs><path d="M3.5 3.5 L26.5 3.5 L32 9 L38 43 L5 44 Z" fill="url(#np)" stroke="#c9cdd2" stroke-width="1"/><path d="M26.5 3.5 L27 9 L32 9" fill="#e0e4e8" stroke="#c9cdd2" stroke-width="0.8"/><path d="M6 4.5 h1.5 M9 4.5 h1.5 M12 4.5 h1.5 M15 4.5 h1.5 M18 4.5 h1.5 M21 4.5 h1.5" stroke="#333" stroke-width="1.3"/><path d="M7 9 h19 M7 12 h21 M7 15 h22" stroke="#a8c8e8" stroke-width="0.8"/><path d="M10 26 Q8 17 16 15 Q23 14 26 19 Q28 24 23 26 Q17 27 14 25 Q12 30 16 33 Q18 36 15 37" fill="#78d048" stroke="#2a6a20" stroke-width="0.9"/><circle cx="22.5" cy="13" r="2.6" fill="#fff" stroke="#222" stroke-width="0.9"/><circle cx="27" cy="14" r="2.6" fill="#fff" stroke="#222" stroke-width="0.9"/><circle cx="23" cy="13.3" r="0.9" fill="#222"/><circle cx="27.5" cy="14.3" r="0.9" fill="#222"/><path d="M7 22.5 h27" stroke="#8a2a9a" stroke-width="0.9"/><path d="M12 20 L17 24 M14 20 L19 24 M20 20 L23 24" stroke="#2a5a20" stroke-width="0.8"/><path d="M21 30 V38 M24 31 h3 M27 33 h2" stroke="#333" stroke-width="0.9"/><path d="M45.5 2 L31 31" stroke="#e8a31a" stroke-width="3.2"/><path d="M45.5 2 L44 5" stroke="#c33" stroke-width="3.2"/><path d="M31.3 30 L30.5 34" stroke="#333" stroke-width="1.5"/><use href="#shortcut" x="2" y="33" width="14" height="14"/></svg>
<svg class="a" style="left:12px;top:236px" width="50" height="50" viewBox="0 0 50 50"><defs><linearGradient id="bx" x1="0" y1="0" x2="1" y2="0"><stop offset="0" stop-color="#e8ecf0"/><stop offset="1" stop-color="#ffffff"/></linearGradient></defs><path d="M2 4 L27 1 L36 4 L36 8 L50 5 L38 12 L5 14 Z" fill="#dfe6ee" stroke="#9aa6b2" stroke-width="0.6"/><path d="M4 14 L36 10 L36 46 L8 48 Z" fill="#8ec8f4"/><path d="M4 14 L9 13 L9 48 L6 48 Z" fill="url(#bx)"/><rect x="14" y="25" width="8" height="16" fill="#4cb83a"/><rect x="14" y="20" width="8" height="6" fill="#f08a20"/><rect x="6" y="16" width="2" height="6" fill="#2a6ad0"/><circle cx="33" cy="31" r="14.5" fill="#dcd8f8" stroke="#6a6a90" stroke-width="0.8"/><path d="M33 31 L24 20 A14 14 0 0 1 30 17 Z M33 31 L42 42 A14 14 0 0 1 36 45 Z" fill="#fff"/><path d="M33 31 L45 24 A14 14 0 0 1 46 31 Z M33 31 L21 38 A14 14 0 0 1 20 31 Z" fill="#a8a4e8"/><circle cx="33" cy="31" r="3.5" fill="#fff" stroke="#7a7aa0" stroke-width="1"/><circle cx="33" cy="31" r="1.5" fill="#ffd0f0"/></svg>
<svg class="a" style="left:13px;top:340px" width="48" height="49" viewBox="0 0 48 49"><defs><linearGradient id="jv" x1="0" y1="0" x2="0" y2="1"><stop offset="0" stop-color="#ffffff"/><stop offset="1" stop-color="#e2e4e8"/></linearGradient></defs><rect x="0.8" y="0.8" width="46.4" height="47.4" rx="5" fill="url(#jv)" stroke="#3a5a7a" stroke-width="1"/><path d="M28 4.5 Q18 12 22 19 Q25.5 24 23.5 28.5" stroke="#e8761c" stroke-width="2.6" fill="none"/><path d="M33.5 10.5 Q25 14 27 20 Q28.5 24 25.5 28" stroke="#e8761c" stroke-width="2.2" fill="none"/><path d="M14 28.5 Q24 25 34 28.5" stroke="#5a7a98" stroke-width="2.2" fill="none"/><path d="M36 26.5 Q42 29 33 36" stroke="#5a7a98" stroke-width="2" fill="none"/><path d="M16 32 Q25 35 33 32 M18 36 Q25 38 31 36 M9 39.5 Q24 46 40 39.5" stroke="#5a7a98" stroke-width="2.2" fill="none"/></svg>
<svg class="a" style="left:14px;top:444px" width="34" height="48" viewBox="0 0 34 48"><use href="#bigfold" width="34" height="48"/></svg>
<svg class="a" style="left:1063px;top:236px" width="34" height="48" viewBox="0 0 34 48"><use href="#bigfold" width="34" height="48"/></svg>
<svg class="a" style="left:12px;top:546px" width="50" height="52" viewBox="0 0 50 52"><circle cx="25" cy="27" r="23.6" fill="#fff"/><circle cx="25" cy="27" r="22.3" fill="#5aac52"/><path d="M25 27 L23.4 3.2 L48.6 2.6 L48.6 23.8 Z" fill="#fff"/><path d="M31.8 18.6 L36.6 5.1 L46.7 4.8 Z" fill="#5aac52"/><path d="M27 5.8 Q28.8 4.3 30.6 5.8 L28.4 16.5 L27 16.5 Z" fill="#f07a22"/><path d="M43 15.3 Q45.8 16.8 44.6 19.2 L35 22.6 L34.3 20.8 Z" fill="#f07a22"/><circle cx="24.7" cy="27.1" r="10.3" fill="#fff"/><circle cx="24.7" cy="27.1" r="6.9" fill="#5aac52"/><use href="#shortcut" x="2.5" y="36.5" width="13.5" height="13.5"/></svg>
<svg class="a" style="left:12px;top:653px" width="50" height="50" viewBox="0 0 50 50"><defs><linearGradient id="zr" x1="0" y1="0" x2="1" y2="0"><stop offset="0" stop-color="#c8306a"/><stop offset="0.6" stop-color="#f0903a"/><stop offset="1" stop-color="#f8d848"/></linearGradient><linearGradient id="zb" x1="0" y1="0" x2="1" y2="1"><stop offset="0" stop-color="#3ab8e8"/><stop offset="1" stop-color="#1a5aa8"/></linearGradient><linearGradient id="zg" x1="1" y1="0" x2="0" y2="1"><stop offset="0" stop-color="#1a9a4a"/><stop offset="1" stop-color="#c8e040"/></linearGradient></defs><path d="M2 4 Q16 -1 36 1 L35 10 Q20 9 5 13 Z" fill="url(#zr)"/><path d="M5 15 L16 12 Q22 24 33 36 L26 44 Q12 32 5 15 Z" fill="url(#zb)"/><path d="M38 2 L48 5 Q44 26 34 40 L27 32 Q36 20 38 2 Z" fill="url(#zg)"/><use href="#shortcut" x="2" y="33" width="14" height="14"/></svg>
<svg class="a" style="left:73px;top:745px" width="17" height="15" viewBox="0 0 17 15"><rect x="1" y="1" width="6.5" height="6" fill="#fff" stroke="#aaa" stroke-width="0.6"/><rect x="9" y="1" width="6.5" height="6" fill="#fff" stroke="#aaa" stroke-width="0.6"/><rect x="5" y="8" width="6.5" height="6" fill="#fff" stroke="#aaa" stroke-width="0.6"/><path d="M2.8 2.5 V5.3 H5.5 V2.5 M12 2.5 V5.5 M6.8 12.5 V9.5 H9.6 V12.5" stroke="#d0202a" stroke-width="1.3" fill="none"/></svg>
<svg class="a" style="left:119px;top:744px" width="18" height="18" viewBox="0 0 18 18"><path d="M4 9.5 A5.5 5.5 0 1 1 14 11 H6.5 A3 3 0 0 0 12.5 12.5" stroke="#2a7ad8" stroke-width="2.6" fill="none"/><path d="M6.5 8 H12" stroke="#2a7ad8" stroke-width="1.5"/><path d="M16 2 Q12 0 3 9 Q-1 16 2 16.5 Q5 17 10 13" stroke="#e8b020" stroke-width="1.4" fill="none"/></svg>
<svg class="a" style="left:164px;top:744px" width="19" height="18" viewBox="0 0 19 18"><path d="M1 3 H7 L8 4.5 H17 V16 H1 Z" fill="#e8c860"/><rect x="1" y="5" width="17" height="11.5" fill="#f4dc8a"/><rect x="2" y="2.5" width="5" height="1.5" fill="#6ab04a"/><path d="M4.5 16.5 V11 H13.5 V16.5" stroke="#3a8ad0" stroke-width="2" fill="none"/><rect x="1" y="8" width="17" height="2" fill="#9cc8ec"/></svg>
<svg class="a" style="left:210px;top:744px" width="18" height="18" viewBox="0 0 18 18"><rect x="0.5" y="0.5" width="16" height="16" fill="#dceaf8" stroke="#6aa2dc"/><circle cx="8.5" cy="8.5" r="6" fill="#f08a1a"/><path d="M6.5 5.3 L12 8.5 L6.5 11.7 Z" fill="#fff"/></svg>
<svg class="a" style="left:256px;top:744px" width="19" height="19" viewBox="0 0 19 19"><ellipse cx="8.5" cy="6.5" rx="7" ry="5" fill="#f4f4f4" stroke="#d04a3a" stroke-width="1.1"/><ellipse cx="8.5" cy="8.5" rx="6" ry="3" fill="none" stroke="#c8c8c8" stroke-width="0.8"/><path d="M8 2 L12 12 M13 3 L10 12" stroke="#555" stroke-width="1"/><circle cx="10.5" cy="15" r="1.8" fill="none" stroke="#2a8ad0" stroke-width="1.3"/><circle cx="15" cy="14.5" r="1.8" fill="none" stroke="#2a8ad0" stroke-width="1.3"/></svg>
<svg class="a" style="left:302px;top:744px" width="18" height="18" viewBox="0 0 18 18"><circle cx="9" cy="9.5" r="8" fill="#58ac4e"/><path d="M17 1.5 L11 8 L17.5 7 Z" fill="#a9c2de"/><path d="M9.2 1.5 L10.8 1.5 L9.8 6 L9 6 Z M12 7.5 L16 6 L16.3 7.3 L12.3 8.5 Z" fill="#f07a22"/><circle cx="8.5" cy="10" r="3.6" fill="#fff"/><circle cx="8.5" cy="10" r="2.3" fill="#58ac4e"/></svg>
<svg class="a" style="left:348px;top:744px" width="19" height="18" viewBox="0 0 19 18"><circle cx="11" cy="7.5" r="6" fill="#3a8ad8"/><path d="M7 5 Q10 3 12 6 Q10 9 8 8 Z M12 9 Q15 8 16 11 Q13 13 12 12 Z" fill="#5ac050"/><path d="M1 12 Q3 6 10 8" stroke="#e84a8a" stroke-width="1.5" fill="none"/><path d="M1.5 13 Q4 8 10 9.5" stroke="#f8c020" stroke-width="1.3" fill="none"/><path d="M8 10 L17 12 L9 17 Z" fill="#2aa02a"/></svg>
<svg class="a" style="left:394px;top:744px" width="18" height="18" viewBox="0 0 18 18"><path d="M9 1 L17 4.5 L9 8 L1 4.5 Z" fill="#6ab04a"/><path d="M1 4.5 L9 8 L9 17 L1 13.5 Z" fill="#8a6440"/><path d="M17 4.5 L9 8 L9 17 L17 13.5 Z" fill="#6e4e30"/><path d="M1 4.5 L9 8 L17 4.5 L17 6.5 L9 10 L1 6.5 Z" fill="#5a9a3a"/></svg>
<svg class="a" style="left:440px;top:744px" width="17" height="17" viewBox="0 0 17 17"><rect x="0" y="0" width="17" height="17" fill="#0a0a0a"/><path d="M4 6 Q8 2 13 4 L11 6 Q8 5 6 7 Q5 11 9 12 L10 10 L8 10 L9 8 L13 8 L11 14 Q3 15 3.5 9 Z" fill="#e01818"/></svg>
<svg class="a" style="left:486px;top:744px" width="19" height="19" viewBox="0 0 19 19"><rect x="1" y="1" width="12" height="10" fill="#d9e4ef" stroke="#7a8896"/><rect x="2.5" y="2.5" width="9" height="7" fill="#1a3fd0"/><rect x="5" y="11" width="4" height="2" fill="#8a97a6"/><circle cx="13" cy="13" r="5" fill="#e9eef2" stroke="#7a8088"/><path d="M10.5 13.5 L12 12 M15.5 12.5 L14 14" stroke="#1c9a2a" stroke-width="1.5"/></svg>
<svg class="a" style="left:532px;top:744px" width="19" height="18" viewBox="0 0 19 18"><path d="M9.5 1 L18 4.5 L9.5 8 L1 4.5 Z" fill="#a8804a"/><path d="M1 4.5 L9.5 8 L9.5 17 L1 13.5 Z" fill="#7a5430"/><path d="M18 4.5 L9.5 8 L9.5 17 L18 13.5 Z" fill="#5a3c20"/><path d="M3 7 L3 12 M7 8.5 L7 14 M12 8.5 L12 14 M16 7 L16 12" stroke="#3a2810" stroke-width="0.8"/></svg>
<div class="a" style="left:1080px;top:739px;width:270px;height:29px;background:linear-gradient(90deg,rgba(122,142,168,0),#7b8fa9 17%,#7a8ea8)"></div>
<svg class="a" style="left:1131px;top:751px" width="10" height="7" viewBox="0 0 10 7"><path d="M1 6 L5 1.5 L9 6 Z" fill="#f4f8fc"/></svg>
<svg class="a" style="left:1152px;top:746px" width="16" height="16" viewBox="0 0 16 16"><rect x="0.5" y="0.5" width="15" height="15" fill="#f6d8d8" stroke="#c88"/><path d="M3 3 L7.5 13 L13 3" stroke="#c01818" stroke-width="2.2" fill="none"/></svg>
<svg class="a" style="left:1176px;top:746px" width="17" height="17" viewBox="0 0 17 17"><path d="M2 1 V16" stroke="#fff" stroke-width="1.3"/><path d="M2.5 2 Q6 1 9 3 Q12 4 14 3 V9 Q11 10 9 8.5 Q6 7 2.5 8 Z" fill="#f0f0f0" stroke="#888" stroke-width="0.5"/><circle cx="12" cy="12.5" r="3.8" fill="#e02020" stroke="#fff" stroke-width="0.8"/><path d="M10.5 11 L13.5 14 M13.5 11 L10.5 14" stroke="#fff" stroke-width="1"/></svg>
<svg class="a" style="left:1200px;top:745px" width="17" height="18" viewBox="0 0 17 18"><rect x="1.5" y="3" width="7" height="13" rx="1" fill="#9a9a9a" stroke="#2a2a2a" stroke-width="0.8"/><rect x="3" y="5" width="4" height="9" fill="#cfcfcf"/><path d="M8 6 H13 Q15 6 15 9 Q15 12 12 12 H8 Z" fill="#fff" stroke="#444" stroke-width="0.6"/><path d="M11 2 V6 M14 2 V6" stroke="#fff" stroke-width="1.4"/><path d="M2.5 11 L8 16.5 M8 11 L2.5 16.5" stroke="#e01010" stroke-width="1.8"/></svg>
<svg class="a" style="left:1224px;top:748px" width="17" height="13" viewBox="0 0 17 13"><path d="M1.5 12 V10 M4.5 12 V8 M7.5 12 V6 M10.5 12 V4 M13.5 12 V1.5" stroke="#f8f8f8" stroke-width="2.2"/></svg>
<svg class="a" style="left:1248px;top:746px" width="17" height="17" viewBox="0 0 17 17"><path d="M1 6 H4 L8 2 V14 L4 10 H1 Z" fill="#f0f0f0" stroke="#777" stroke-width="0.6"/><circle cx="12" cy="12" r="4.2" fill="#e01818" stroke="#fff" stroke-width="0.7"/><path d="M9.5 14.5 L14.5 9.5" stroke="#fff" stroke-width="1.3"/></svg>
<div class="t" style="left:1291px;top:748.44px;font-size:12px;color:#fff;transform:scaleX(0.9223);transform-origin:0 0;">5:35 CH</div>
<div class="a" style="left:1351px;top:739px;width:15px;height:29px;background:linear-gradient(90deg,#6d7f96,#8b9cb2 40%,#7a8ba2);border:1px solid #4f5e72;border-radius:2px"></div>
</body></html>
